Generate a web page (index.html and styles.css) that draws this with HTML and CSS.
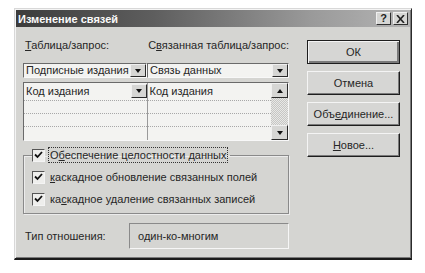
FILE: index.html
```html
<!DOCTYPE html>
<html lang="ru">
<head>
<meta charset="utf-8">
<title>Изменение связей</title>
<link rel="stylesheet" href="styles.css">
</head>
<body>
<div class="dialog">
  <div class="titlebar">
    <span class="title">Изменение связей</span>
    <div class="tbtns">
      <span class="tbtn">?</span>
      <span class="tbtn x">
        <svg width="9" height="8" viewBox="0 0 9 8"><path d="M1 0 L8 8 M8 0 L1 8" stroke="#222" stroke-width="1.6"/></svg>
      </span>
    </div>
  </div>
  <div class="content">
    <div class="left">
      <div class="labels">
        <span class="lab1"><u>Т</u>аблица/запрос:</span>
        <span class="lab2">С<u>в</u>язанная таблица/запрос:</span>
      </div>
      <div class="combos">
        <div class="combo c1"><span class="ctext">Подписные издания</span><span class="dd"><i class="tri"></i></span></div>
        <div class="combo c2"><span class="ctext">Связь данных</span><span class="dd"><i class="tri"></i></span></div>
      </div>
      <div class="grid">
        <div class="gcol g1">
          <div class="row first"><span class="ctext">Код издания</span><span class="dd small"><i class="tri"></i></span></div>
          <div class="row"></div>
          <div class="row"></div>
          <div class="row last"></div>
        </div>
        <div class="gcol g2">
          <div class="row first"><span class="ctext">Код издания</span></div>
          <div class="row"></div>
          <div class="row"></div>
          <div class="row last"></div>
        </div>
        <div class="scroll">
          <span class="sbtn"><i class="tri up"></i></span>
          <span class="track"></span>
          <span class="sbtn"><i class="tri"></i></span>
        </div>
      </div>
      <fieldset class="group">
        <legend class="legend">
          <span class="chk"><svg width="9" height="8" viewBox="0 0 9 8"><path d="M1 3.5 L3.5 6 L8 1" fill="none" stroke="#111" stroke-width="1.8"/></svg></span>
          <span class="focus">О<u>б</u>еспечение целостности данных</span>
        </legend>
        <div class="crow">
          <span class="chk"><svg width="9" height="8" viewBox="0 0 9 8"><path d="M1 3.5 L3.5 6 L8 1" fill="none" stroke="#111" stroke-width="1.8"/></svg></span>
          <span class="ctxt"><u>к</u>аскадное обновление связанных полей</span>
        </div>
        <div class="crow">
          <span class="chk"><svg width="9" height="8" viewBox="0 0 9 8"><path d="M1 3.5 L3.5 6 L8 1" fill="none" stroke="#111" stroke-width="1.8"/></svg></span>
          <span class="ctxt">ка<u>с</u>кадное удаление связанных записей</span>
        </div>
      </fieldset>
      <div class="rel">
        <span class="rlab">Тип отношения:</span>
        <div class="rbox">один-ко-многим</div>
      </div>
    </div>
    <div class="buttons">
      <div class="btn default">ОК</div>
      <div class="btn">Отмена</div>
      <div class="btn">Объ<u>е</u>динение...</div>
      <div class="btn"><u>Н</u>овое...</div>
    </div>
  </div>
</div>
</body>
</html>
```

FILE: styles.css
```css
html, body {
  margin: 0;
  padding: 0;
  background: #ffffff;
}
body {
  width: 425px;
  height: 273px;
  overflow: hidden;
  font-family: "Liberation Sans", Arial, sans-serif;
  font-size: 11px;
  color: #262626;
}
u {
  text-decoration: underline;
  text-underline-offset: 1px;
}
.dialog {
  box-sizing: border-box;
  margin: 8px 0 0 14px;
  width: 398px;
  height: 252px;
  background: #d5d5d2;
  border: 1px solid;
  border-color: #d8d8d8 #2a2a2a #1a1a1a #d8d8d8;
  border-bottom-width: 2px;
  box-shadow: inset 1px 1px #f4f4f4, inset -1px -1px #7a7a7a;
  padding: 1px;
  display: flex;
  flex-direction: column;
}
.titlebar {
  height: 17px;
  background: linear-gradient(to right, #3c3c3c 0%, #5e5e5e 35%, #9a9a9a 75%, #b4b4b4 100%);
  display: flex;
  align-items: center;
  justify-content: space-between;
  padding: 0 2px 0 2px;
}
.title {
  color: #fafafa;
  font-weight: bold;
  font-size: 11px;
}
.tbtns {
  display: flex;
  gap: 2px;
}
.tbtn {
  box-sizing: border-box;
  width: 15px;
  height: 13px;
  background: #d6d6d4;
  border: 1px solid;
  border-color: #f0f0f0 #303030 #303030 #f0f0f0;
  display: flex;
  align-items: center;
  justify-content: center;
  font-weight: bold;
  font-size: 11px;
  color: #222;
  line-height: 1;
}
.content {
  display: flex;
  padding: 11px 6px 0 7px;
}
.left {
  width: 266px;
  display: flex;
  flex-direction: column;
}
.labels {
  display: flex;
  height: 14px;
  line-height: 14px;
  white-space: nowrap;
}
.lab1 {
  width: 124px;
  padding-left: 2px;
}
.lab2 {
  padding-left: 1px;
}
.combos {
  display: flex;
  margin-top: 11px;
}
.combo {
  box-sizing: border-box;
  height: 15px;
  background: #f3f3f1;
  border: 1px solid;
  border-color: #6a6a6a #f8f8f8 #f8f8f8 #6a6a6a;
  display: flex;
  align-items: stretch;
  justify-content: space-between;
}
.combo.c1 { width: 124px; }
.combo.c2 { width: 142px; }
.ctext {
  padding-left: 2px;
  line-height: 13px;
  white-space: nowrap;
}
.dd {
  box-sizing: border-box;
  width: 16px;
  flex: none;
  background: #d6d6d4;
  border: 1px solid;
  border-color: #f0f0f0 #2a2a2a #2a2a2a #f0f0f0;
  display: flex;
  align-items: center;
  justify-content: center;
}
.tri {
  width: 0;
  height: 0;
  border-left: 3.5px solid transparent;
  border-right: 3.5px solid transparent;
  border-top: 4px solid #111;
}
.tri.up {
  border-top: 0;
  border-bottom: 4px solid #111;
}
.grid {
  box-sizing: border-box;
  margin-top: 4px;
  height: 59px;
  background: #f3f3f1;
  border: 1px solid;
  border-color: #6a6a6a #f8f8f8 #f8f8f8 #6a6a6a;
  display: flex;
}
.gcol {
  display: flex;
  flex-direction: column;
}
.gcol.g1 {
  width: 123px;
  border-right: 1px solid #9a9a9a;
}
.gcol.g2 {
  width: 124px;
}
.row {
  box-sizing: border-box;
  height: 13px;
  border-bottom: 1px dotted #a8a8a8;
  display: flex;
  justify-content: space-between;
}
.row.first {
  height: 18px;
  padding-top: 2px;
}
.row.last {
  border-bottom: 0;
  flex: 1;
}
.dd.small {
  height: 14px;
  margin-top: -1px;
}
.scroll {
  width: 17px;
  display: flex;
  flex-direction: column;
}
.sbtn {
  box-sizing: border-box;
  height: 15px;
  background: #d6d6d4;
  border: 1px solid;
  border-color: #f0f0f0 #2a2a2a #2a2a2a #f0f0f0;
  display: flex;
  align-items: center;
  justify-content: center;
}
.track {
  flex: 1;
  background: repeating-conic-gradient(#e8e8e6 0 25%, #c6c6c4 0 50%) 0 0 / 2px 2px;
}
.group {
  margin: 6px 0 0 0;
  padding: 6px 8px 4px 8px;
  border: 1px solid #8a8a8a;
  box-shadow: inset 1px 1px #ececec, 1px 1px #ececec;
  height: 67px;
  box-sizing: border-box;
}
.legend {
  padding: 0 2px 0 0;
  margin-left: 0;
  display: flex;
  align-items: center;
  gap: 3px;
  height: 16px;
}
.chk {
  box-sizing: border-box;
  width: 13px;
  height: 13px;
  background: #eeeeec;
  border: 1px solid;
  border-color: #555 #f4f4f4 #f4f4f4 #555;
  display: flex;
  align-items: center;
  justify-content: center;
}
.focus {
  border: 1px dotted #333;
  padding: 0 1px;
  line-height: 14px;
}
.crow {
  display: flex;
  align-items: center;
  gap: 5px;
  height: 16px;
  margin-bottom: 6px;
}
.crow:last-child {
  margin-bottom: 0;
}
.ctxt {
  line-height: 14px;
}
.rel {
  display: flex;
  align-items: center;
  margin-top: 9px;
}
.rlab {
  width: 104px;
  padding-left: 2px;
}
.rbox {
  box-sizing: border-box;
  width: 160px;
  height: 26px;
  border: 1px solid;
  border-color: #8a8a8a #f6f6f6 #f6f6f6 #8a8a8a;
  padding-left: 8px;
  display: flex;
  align-items: center;
}
.buttons {
  margin-left: 18px;
  width: 93px;
  display: flex;
  flex-direction: column;
  gap: 7px;
  padding-top: 2px;
}
.btn {
  box-sizing: border-box;
  height: 24px;
  background: #d6d6d4;
  border: 1px solid;
  border-color: #f4f4f4 #1e1e1e #1e1e1e #f4f4f4;
  box-shadow: inset -1px -1px #7a7a7a;
  display: flex;
  align-items: center;
  justify-content: center;
}
.btn.default {
  border: 1px solid #1e1e1e;
  box-shadow: inset 1px 1px #f4f4f4, inset -2px -2px #7a7a7a;
}
```
